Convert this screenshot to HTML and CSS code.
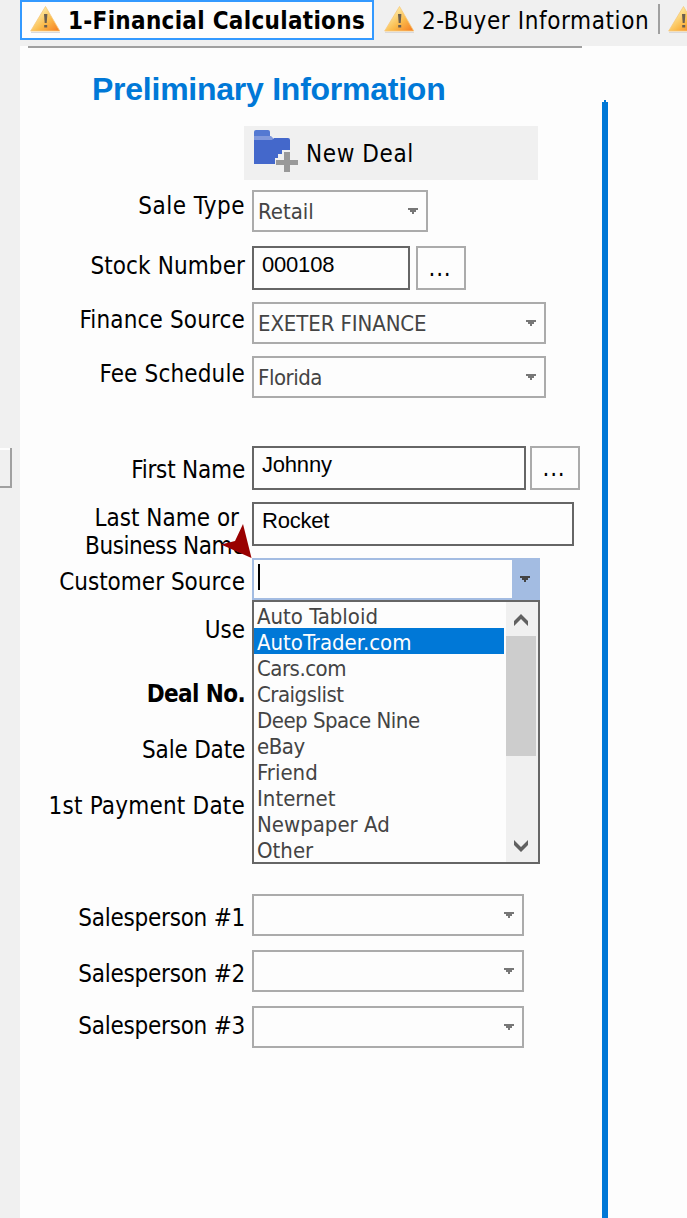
FILE: index.html
```html
<!DOCTYPE html>
<html lang="en">
<head>
  <meta charset="UTF-8" />
  <title>Financial Calculations</title>
  <meta name="viewport" content="width=device-width, initial-scale=1.0" />
  <link rel="stylesheet" href="styles.css">
</head>
<body>
  <svg width="0" height="0" class="defs">
    <defs>
      <linearGradient id="warnFill" x1="0" y1="0" x2="1" y2="1">
        <stop offset="0.25" stop-color="#fde9a0" />
        <stop offset="0.6" stop-color="#fbbb4c" />
        <stop offset="1" stop-color="#f5791f" />
      </linearGradient>
      <symbol id="warning" viewBox="0 0 32 28">
        <path d="M1 27.500H30" stroke="#d9d9dc" stroke-width="1" />
        <path d="M15.500 1.500L29.800 26H0.700Z" fill="url(#warnFill)" stroke="#f8c878" stroke-width="0.800" stroke-linejoin="round" />
        <path d="M14 9h3.400l-.7 9h-2z" fill="#6b5f50" />
        <rect x="14.200" y="20" width="3" height="2.500" fill="#6b5f50" />
      </symbol>
      <symbol id="arrow" viewBox="0 0 10 6">
        <path d="M0 0h10v2H8v2H6v2H4V4H2V2H0z" fill="currentColor" />
      </symbol>
    </defs>
  </svg>

  <div class="tabs">
    <div class="tab active">
      <svg class="warn"><use href="#warning" /></svg>
      <span>1-Financial Calculations</span>
    </div>
    <div class="tab buyer">
      <svg class="warn"><use href="#warning" /></svg>
      <span>2-Buyer Information</span>
    </div>
    <div class="tab">
      <svg class="warn"><use href="#warning" /></svg>
    </div>
  </div>

  <div class="main">
    <div class="side"><div class="side-btn"></div></div>

    <div class="panel">
      <div class="rule"></div>
      <h1>Preliminary Information</h1>

      <button class="new-deal">
        <svg width="46" height="44" viewBox="0 0 46 44">
          <path d="M2 8V4q0-2 2-2h12q2 0 2 2v4z" fill="#5479d2" />
          <path d="M2 8h17l2 2v2H2z" fill="#8199dc" />
          <path d="M2 12h18l2-2h14q2 0 2 2v10h-8v4h-4v4h-3v6H2z" fill="#4468cb" />
          <path d="M32 24h6v8h8v5h-8v7h-6v-7h-8v-5h8z" fill="#999" />
        </svg>
        <span>New Deal</span>
      </button>

      <div class="form">
        <div class="row sale-type">
          <label>Sale Type</label>
          <div class="combo"><span>Retail</span><svg class="arrow"><use href="#arrow" /></svg></div>
        </div>
        <div class="row stock">
          <label>Stock Number</label>
          <div class="input">000108</div>
          <button class="more">...</button>
        </div>
        <div class="row finance">
          <label>Finance Source</label>
          <div class="combo"><span class="caps">EXETER FINANCE</span><svg class="arrow"><use href="#arrow" /></svg></div>
        </div>
        <div class="row finance">
          <label>Fee Schedule</label>
          <div class="combo"><span class="tight">Florida</span><svg class="arrow"><use href="#arrow" /></svg></div>
        </div>
        <div class="row first-name">
          <label>First Name</label>
          <div class="input">Johnny</div>
          <button class="more">...</button>
        </div>
        <div class="row last-name">
          <label><span class="line-or">Last Name or</span><br>Business Name</label>
          <div class="input">Rocket</div>
        </div>
        <div class="row source">
          <label>Customer Source</label>
          <div class="combo open">
            <div class="caret"></div>
            <div class="drop-btn"><svg class="arrow"><use href="#arrow" /></svg></div>
            <svg class="pointer" viewBox="0 0 31 35">
              <path d="M22 0L30.500 34L0 20.500L14 17Z" fill="#900" />
            </svg>
            <div class="dropdown">
              <ul>
                <li>Auto Tabloid</li>
                <li class="selected">AutoTrader.com</li>
                <li class="tight">Cars.com</li>
                <li class="tight">Craigslist</li>
                <li class="tight">Deep Space Nine</li>
                <li class="tight">eBay</li>
                <li>Friend</li>
                <li>Internet</li>
                <li>Newpaper Ad</li>
                <li>Other</li>
              </ul>
              <div class="scrollbar">
                <svg viewBox="0 0 14 12"><path d="M0 7L7 0L14 7V12L7 5L0 12Z" fill="#606060" /></svg>
                <div class="thumb"></div>
                <svg viewBox="0 0 14 12"><path d="M0 5L7 12L14 5V0L7 7L0 0Z" fill="#606060" /></svg>
              </div>
            </div>
          </div>
        </div>
        <div class="row use"><label>Use</label></div>
        <div class="row deal-no"><label>Deal No.</label></div>
        <div class="row date"><label>Sale Date</label></div>
        <div class="row date payment"><label>1st Payment Date</label></div>
        <div class="row person first">
          <label>Salesperson #1</label>
          <div class="combo"><svg class="arrow"><use href="#arrow" /></svg></div>
        </div>
        <div class="row person">
          <label>Salesperson #2</label>
          <div class="combo"><svg class="arrow"><use href="#arrow" /></svg></div>
        </div>
        <div class="row person third">
          <label>Salesperson #3</label>
          <div class="combo"><svg class="arrow"><use href="#arrow" /></svg></div>
        </div>
      </div>
    </div>

    <div class="divider"></div>
  </div>
</body>
</html>
```
FILE: styles.css
```css
* {
  box-sizing: border-box;
  margin: 0;
  padding: 0;
}

body {
  width: 687px;
  height: 1218px;
  overflow: hidden;
  background-color: #f0f0f0;
  color: #000;
  font-family: "DejaVu Sans Condensed", "DejaVu Sans", sans-serif;
  font-stretch: condensed;
  font-size: 24px;
}

svg {
  display: block;
  flex-shrink: 0;
}

.defs {
  position: absolute;
}

button {
  font: inherit;
  color: inherit;
  border: none;
}

/* tabs */
.tabs {
  display: flex;
  height: 46px;
  padding-left: 20px;
}

.tab {
  display: flex;
  flex-shrink: 0;
  height: 40px;
  padding: 5px 0 0 8px;
  line-height: 33px;
  white-space: nowrap;
}

.tab.active {
  width: 354px;
  padding: 3px 0 0 8px;
  background-color: #fdfdfd;
  border: 2px solid #3399ff;
  font-weight: bold;
  letter-spacing: 0.3px;
}

.buyer {
  width: 286px;
  height: 30px;
  margin-top: 4px;
  padding: 1px 0 0 10px;
  border-right: 2px solid #a0a0a0;
  letter-spacing: 0.6px;
}

.warn {
  width: 32px;
  height: 28px;
  margin-right: 6px;
}

/* page */
.main {
  display: flex;
  height: 1172px;
}

.side {
  width: 20px;
  padding-top: 402px;
}

.side-btn {
  width: 12px;
  height: 40px;
  border: solid #a0a0a0;
  border-width: 0 2px 2px 0;
  box-shadow: inset 0 2px #fdfdfd;
}

.panel {
  width: 582px;
  background-color: #fdfdfd;
}

.divider {
  flex: 1;
  padding-top: 54px;
  background-color: #fdfdfd;
}

.divider::before {
  content: "";
  display: block;
  width: 6px;
  height: 100%;
  background-color: #0078d7;
  clip-path: polygon(2px 0, 4px 0, 4px 2px, 100% 2px, 100% 100%, 0 100%, 0 2px, 2px 2px);
}

.rule {
  width: 554px;
  height: 2px;
  margin-left: 8px;
  background-color: #a0a0a0;
}

h1 {
  height: 78px;
  padding: 22px 0 0 72px;
  font: bold 32px/38px "Liberation Sans", sans-serif;
  letter-spacing: -0.25px;
  color: #0078d7;
  white-space: nowrap;
}

.new-deal {
  display: flex;
  width: 294px;
  height: 54px;
  margin-left: 224px;
  padding: 2px 0 0 8px;
  gap: 8px;
  background-color: #f0f0f0;
  line-height: 52px;
  letter-spacing: 0.6px;
}

/* form */
.form {
  padding-top: 10px;
}

.row {
  display: flex;
  height: 42px;
  margin-bottom: 12px;
}

label {
  width: 225px;
  margin-right: 7px;
  padding-top: 4px;
  line-height: 28px;
  text-align: right;
  white-space: nowrap;
}

.combo {
  position: relative;
  display: flex;
  justify-content: space-between;
  padding: 0 8px 0 4px;
  border: 2px solid #ababab;
  color: #444;
  font-size: 22px;
  line-height: 40px;
  white-space: nowrap;
}

.arrow {
  width: 10px;
  height: 6px;
  margin: 16px 0 0 auto;
  color: #777;
}

.input {
  height: 44px;
  padding: 4px 8px;
  border: 2px solid #666;
  font: 22px/26px "Liberation Sans", sans-serif;
  letter-spacing: -0.2px;
}

.more {
  width: 50px;
  height: 44px;
  padding-right: 2px;
  border: 2px solid #ababab;
  background-color: #fdfdfd;
  line-height: 38px;
  letter-spacing: 0.8px;
}

.sale-type {
  margin-bottom: 14px;
}

.sale-type label {
  padding-top: 2px;
  letter-spacing: 0.5px;
}

.sale-type .combo {
  width: 176px;
}

.stock {
  height: 44px;
}

.stock label {
  padding-top: 6px;
  letter-spacing: 0.1px;
}

.stock .input {
  width: 158px;
  margin-right: 6px;
}

.finance label {
  letter-spacing: 0.15px;
}

.finance .combo {
  width: 294px;
}

.caps {
  letter-spacing: -0.1px;
}

.tight {
  letter-spacing: -0.5px;
}

.first-name {
  height: 44px;
  margin-top: 48px;
}

.first-name label {
  padding-top: 10px;
  letter-spacing: -0.2px;
}

.first-name .input {
  width: 274px;
  margin-right: 4px;
}

.last-name {
  height: 44px;
}

.last-name label {
  padding-top: 2px;
  letter-spacing: -0.45px;
}

.line-or {
  margin-right: 6px;
  letter-spacing: 0;
}

.last-name .input {
  width: 322px;
}

.source {
  margin-bottom: 16px;
}

.source label {
  padding-top: 10px;
}

.open {
  width: 288px;
  padding: 0 0 0 4px;
  border-color: #a3bce2;
}

.caret {
  width: 2px;
  height: 26px;
  margin-top: 4px;
  background-color: #000;
}

.drop-btn {
  width: 26px;
  padding-right: 8px;
  background-color: #a3bce2;
}

.drop-btn .arrow {
  color: #444;
}

.pointer {
  position: absolute;
  left: -33px;
  top: -36px;
  width: 31px;
  height: 35px;
}

.dropdown {
  position: absolute;
  left: -2px;
  top: 40px;
  display: flex;
  width: 288px;
  height: 264px;
  border: 2px solid #666;
  background-color: #fdfdfd;
}

.dropdown ul {
  width: 250px;
  list-style: none;
}

.dropdown li {
  height: 26px;
  padding-left: 3px;
  line-height: 29px;
}

.dropdown .selected {
  background-color: #0078d7;
  color: #fdfdfd;
}

.scrollbar {
  display: flex;
  flex-direction: column;
  width: 32px;
  margin-left: 2px;
  background-color: #f0f0f0;
}

.scrollbar svg {
  width: 14px;
  height: 12px;
  margin: 12px 0 0 8px;
}

.thumb {
  width: 30px;
  height: 120px;
  margin: 10px 0 72px;
  background-color: #cdcdcd;
}

.use,
.deal-no,
.date {
  height: 28px;
  margin-bottom: 28px;
}

.use {
  margin-bottom: 36px;
}

.use label,
.deal-no label,
.date label {
  padding-top: 0;
}

.deal-no {
  font-weight: bold;
  letter-spacing: -0.6px;
}

.date {
  letter-spacing: -0.2px;
}

.payment {
  letter-spacing: 0.2px;
}

.person {
  margin-bottom: 14px;
}

.person.first {
  margin-top: 74px;
}

.person label {
  padding-top: 10px;
  letter-spacing: -0.25px;
}

.person.third label {
  padding-top: 6px;
}

.person .combo {
  width: 272px;
}
```
